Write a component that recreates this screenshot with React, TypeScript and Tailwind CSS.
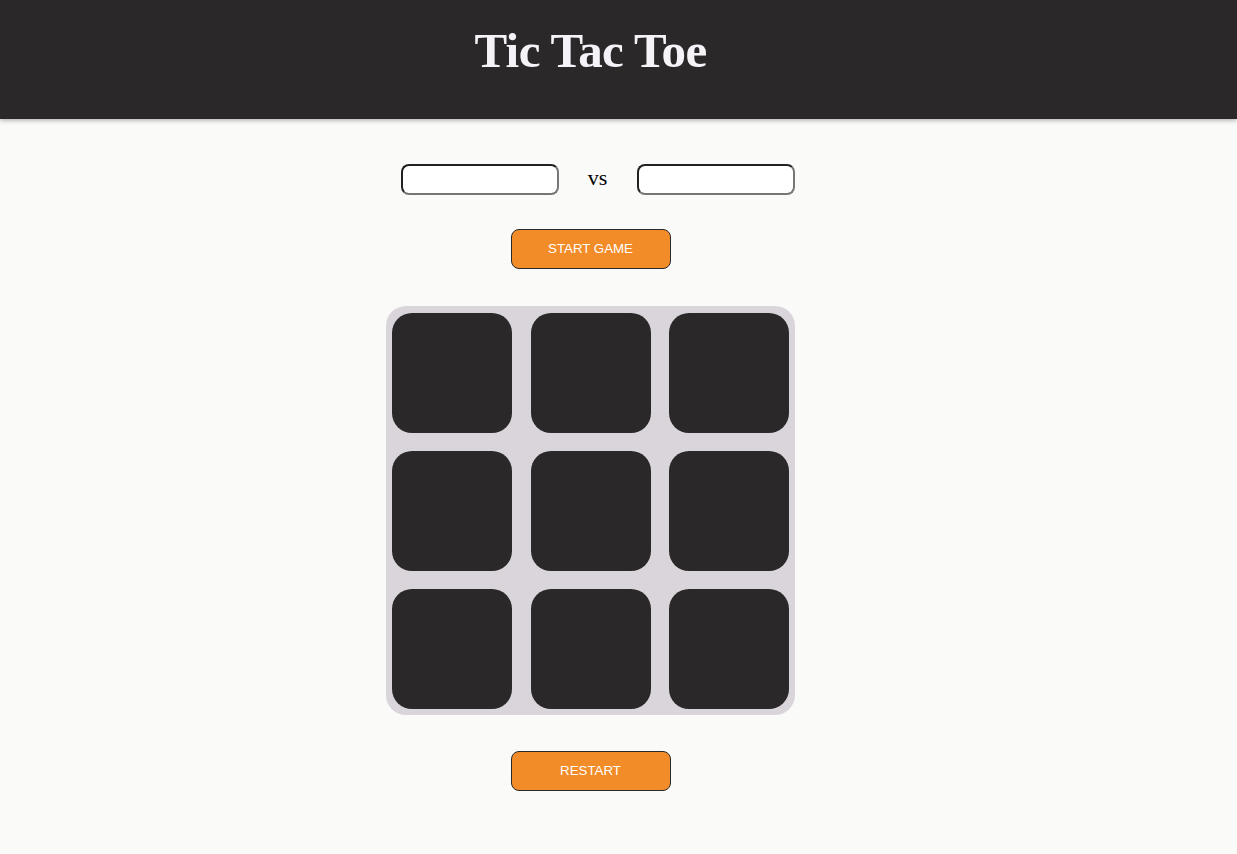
import React, { useState } from 'react';

type Cell = 'X' | 'O' | null;

const App: React.FC = () => {
    const [board, setBoard] = useState<Cell[]>(Array(9).fill(null));
    const [p1, setP1] = useState('');
    const [p2, setP2] = useState('');
    const [turn, setTurn] = useState<'X' | 'O'>('X');

    const play = (i: number) => {
        if (board[i]) return;
        const next = [...board];
        next[i] = turn;
        setBoard(next);
        setTurn(turn === 'X' ? 'O' : 'X');
    };

    const restart = () => {
        setBoard(Array(9).fill(null));
        setTurn('X');
    };

    return (
        <div className="min-h-[854px] bg-[#fafaf9]">
            <header className="h-[119px] bg-[#2a2829] shadow-[0_2px_4px_rgba(0,0,0,0.25)]">
                <div className="w-[1181px] pt-[19px] text-center">
                    <h1 className="text-[49px] font-bold leading-[64px] tracking-[-0.6px] text-[#f5f3f7] font-['Liberation_Serif',serif]">
                        Tic Tac Toe
                    </h1>
                </div>
            </header>

            <main className="w-[1181px] flex flex-col items-center pt-[45px]">
                <div className="flex items-center ml-[14px]">
                    <input
                        value={p1}
                        onChange={(e) => setP1(e.target.value)}
                        className="w-[158px] h-[31px] bg-white rounded-lg border-2 border-[#767676] [border-style:inset] px-2 text-sm outline-none"
                    />
                    <span className="w-[78px] -mt-[4px] text-center text-[22px] leading-none font-normal font-['Liberation_Serif',serif] text-black">vs</span>
                    <input
                        value={p2}
                        onChange={(e) => setP2(e.target.value)}
                        className="w-[158px] h-[31px] bg-white rounded-lg border-2 border-[#767676] [border-style:inset] px-2 text-sm outline-none"
                    />
                </div>

                <button className="mt-[34px] w-[160px] h-[40px] rounded-lg border border-[#2a2829] bg-[#f28c28] text-white text-[13.3px] font-['Liberation_Sans',sans-serif]">
                    START GAME
                </button>

                <div className="mt-[37px] w-[409px] h-[409px] rounded-[20px] bg-[#d9d5da] px-[6px] pt-[7px] grid grid-cols-3 grid-rows-[120px_120px_120px] gap-x-[18.5px] gap-y-[18px]">
                    {board.map((c, i) => (
                        <button
                            key={i}
                            onClick={() => play(i)}
                            className="w-[120px] h-[120px] rounded-[20px] bg-[#2a2829] text-white text-6xl font-bold font-['Liberation_Sans',sans-serif]"
                        >
                            {c}
                        </button>
                    ))}
                </div>

                <button
                    onClick={restart}
                    className="mt-[36px] w-[160px] h-[40px] rounded-lg border border-[#2a2829] bg-[#f28c28] text-white text-[13.3px] font-['Liberation_Sans',sans-serif]"
                >
                    RESTART
                </button>
            </main>
        </div>
    );
};

export default App;
